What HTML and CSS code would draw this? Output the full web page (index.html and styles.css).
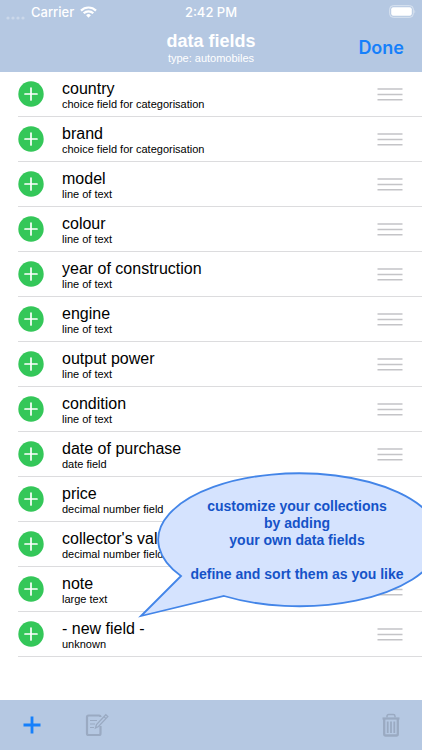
FILE: index.html
```html
<!DOCTYPE html>
<html lang="en">
<head>
<meta charset="utf-8">
<meta name="viewport" content="width=device-width, initial-scale=1">
<title>data fields</title>
<link rel="stylesheet" href="styles.css">
</head>
<body>
<svg class="sprite" aria-hidden="true">
  <symbol id="plus" viewBox="0 0 26 26"><circle cx="13" cy="13" r="12.7" fill="#34c759"/><path d="M13 7v12M7 13h12" stroke="#fff" stroke-width="1.7" stroke-linecap="round"/></symbol>
  <symbol id="grip" viewBox="0 0 26 14"><path d="M.5 2h25M.5 7.500h25M.5 12.800h25" stroke="#c4c4c7" stroke-width="1.500"/></symbol>
</svg>
<header class="top">
  <div class="status">
    <div class="carrier">
      <svg class="signal" width="19" height="4" viewBox="0 0 19 4" fill="#cbd8ea" aria-hidden="true"><circle cx="2" cy="2" r="1.600"/><circle cx="7" cy="2" r="1.600"/><circle cx="12" cy="2" r="1.600"/><circle cx="17" cy="2" r="1.600"/></svg>
      <span>Carrier</span>
      <svg width="17" height="12" viewBox="0 0 17 12" fill="none" stroke="#fff" stroke-width="2.200" aria-hidden="true"><path d="M1 4.600a10.600 10.600 0 0 1 15 0M3.700 7.300a6.800 6.800 0 0 1 9.600 0"/><path d="M8.500 11.700 6.100 9.300a3.400 3.400 0 0 1 4.800 0z" fill="#fff" stroke="none"/></svg>
    </div>
    <span>2:42 PM</span>
    <svg class="battery" width="27" height="13" viewBox="0 0 27 13" aria-hidden="true"><rect x=".7" y=".7" width="23.600" height="11.600" rx="3.500" fill="none" stroke="#dae4f1"/><rect x="2.200" y="2.200" width="20.600" height="8.600" rx="2" fill="#fff"/><path d="M25.500 4.500q1.300 2 0 4z" fill="#dae4f1"/></svg>
  </div>
  <div class="nav">
    <div class="heading"><h1>data fields</h1><p>type: automobiles</p></div>
    <button class="done" type="button">Done</button>
  </div>
</header>
<main class="content">
  <ul class="fields">
    <li><button type="button" aria-label="Add country"><svg class="plus"><use href="#plus"/></svg></button><div class="label"><h2>country</h2><p>choice field for categorisation</p></div><button type="button" aria-label="Move country"><svg class="grip"><use href="#grip"/></svg></button></li>
    <li><button type="button" aria-label="Add brand"><svg class="plus"><use href="#plus"/></svg></button><div class="label"><h2>brand</h2><p>choice field for categorisation</p></div><button type="button" aria-label="Move brand"><svg class="grip"><use href="#grip"/></svg></button></li>
    <li><button type="button" aria-label="Add model"><svg class="plus"><use href="#plus"/></svg></button><div class="label"><h2>model</h2><p>line of text</p></div><button type="button" aria-label="Move model"><svg class="grip"><use href="#grip"/></svg></button></li>
    <li><button type="button" aria-label="Add colour"><svg class="plus"><use href="#plus"/></svg></button><div class="label"><h2>colour</h2><p>line of text</p></div><button type="button" aria-label="Move colour"><svg class="grip"><use href="#grip"/></svg></button></li>
    <li><button type="button" aria-label="Add year of construction"><svg class="plus"><use href="#plus"/></svg></button><div class="label"><h2>year of construction</h2><p>line of text</p></div><button type="button" aria-label="Move year of construction"><svg class="grip"><use href="#grip"/></svg></button></li>
    <li><button type="button" aria-label="Add engine"><svg class="plus"><use href="#plus"/></svg></button><div class="label"><h2>engine</h2><p>line of text</p></div><button type="button" aria-label="Move engine"><svg class="grip"><use href="#grip"/></svg></button></li>
    <li><button type="button" aria-label="Add output power"><svg class="plus"><use href="#plus"/></svg></button><div class="label"><h2>output power</h2><p>line of text</p></div><button type="button" aria-label="Move output power"><svg class="grip"><use href="#grip"/></svg></button></li>
    <li><button type="button" aria-label="Add condition"><svg class="plus"><use href="#plus"/></svg></button><div class="label"><h2>condition</h2><p>line of text</p></div><button type="button" aria-label="Move condition"><svg class="grip"><use href="#grip"/></svg></button></li>
    <li><button type="button" aria-label="Add date of purchase"><svg class="plus"><use href="#plus"/></svg></button><div class="label"><h2>date of purchase</h2><p>date field</p></div><button type="button" aria-label="Move date of purchase"><svg class="grip"><use href="#grip"/></svg></button></li>
    <li><button type="button" aria-label="Add price"><svg class="plus"><use href="#plus"/></svg></button><div class="label"><h2>price</h2><p>decimal number field</p></div><button type="button" aria-label="Move price"><svg class="grip"><use href="#grip"/></svg></button></li>
    <li><button type="button" aria-label="Add collector's value"><svg class="plus"><use href="#plus"/></svg></button><div class="label"><h2>collector's value</h2><p>decimal number field</p></div><button type="button" aria-label="Move collector's value"><svg class="grip"><use href="#grip"/></svg></button></li>
    <li><button type="button" aria-label="Add note"><svg class="plus"><use href="#plus"/></svg></button><div class="label"><h2>note</h2><p>large text</p></div><button type="button" aria-label="Move note"><svg class="grip"><use href="#grip"/></svg></button></li>
    <li><button type="button" aria-label="Add new field"><svg class="plus"><use href="#plus"/></svg></button><div class="label"><h2>- new field -</h2><p>unknown</p></div><button type="button" aria-label="Move new field"><svg class="grip"><use href="#grip"/></svg></button></li>
  </ul>
  <aside class="bubble">
    <svg width="302" height="146" viewBox="0 0 302 146" aria-hidden="true"><path d="M43 104 3 144 86 124A141 66.500 0 1 0 43 104Z" fill="#d5e3fe" stroke="#4385e8" stroke-width="1.800"/></svg>
    <div class="message">
      <p>customize your collections<br>by adding<br>your own data fields</p>
      <p>define and sort them as you like</p>
    </div>
  </aside>
</main>
<footer class="toolbar">
  <button type="button" aria-label="Add"><svg width="18" height="18" viewBox="0 0 18 18"><path d="M9 .5v17M.5 9h17" stroke="#1680fb" stroke-width="2.800"/></svg></button>
  <button type="button" aria-label="Edit" disabled><svg width="24" height="24" viewBox="0 0 24 24" fill="none" stroke="#9aaac2" stroke-width="1.500"><path d="M15.500 4V4Q15.500 2.500 14 2.500H3.500Q2 2.500 2 4V20.500Q2 22 3.500 22H14Q15.500 22 15.500 20.500V13" stroke-width="2.200"/><path d="M5 7.500h7M5 11h5M5 14.500h4" stroke-width="1.200"/><path d="m10.500 15 1-3.500L20.800 1.700l2 1.900L13.500 13.500z M19 3.600l2 2" fill="#b5c8e2" stroke-width="1.300"/></svg></button>
  <button class="trash" type="button" aria-label="Delete" disabled><svg width="18" height="24" viewBox="0 0 18 24" fill="none" stroke="#9aaac2"><path d="M5 4.500V3.200Q5 1.500 6.700 1.500h4.600Q13 1.500 13 3.200v1.300" stroke-width="1.500"/><path d="M.5 5.500h17" stroke-width="2.200"/><path d="M2.200 6v15Q2.200 22.500 3.700 22.500h10.600q1.500 0 1.500-1.500V6" stroke-width="2.300"/><path d="M5.700 8.500v11.500M9 8.500v11.500M12.300 8.500v11.500" stroke-width="1.800"/></svg></button>
</footer>
</body>
</html>
```
FILE: styles.css
```css
* { box-sizing: border-box; }
body, h1, h2, p, ul { margin: 0; padding: 0; }
body {
  display: flex;
  flex-direction: column;
  min-height: 100vh;
  background: #fff;
  color: #000;
  font-family: "Liberation Sans", Arial, sans-serif;
}
button {
  display: flex;
  padding: 0;
  border: 0;
  background: none;
  font-family: inherit;
}
svg { display: block; flex-shrink: 0; }
.sprite { position: absolute; width: 0; height: 0; }

.top { background: #b5c8e2; color: #fff; }
.status {
  display: grid;
  grid-template-columns: 1fr auto 1fr;
  align-items: center;
  height: 23px;
  padding: 0 6px;
  font-family: Inter, "Liberation Sans", sans-serif;
  font-size: 13px;
  font-weight: 500;
  line-height: 16px;
}
.carrier { display: flex; align-items: center; gap: 6px; }
.signal { align-self: end; }
.battery { justify-self: end; }
.nav {
  display: grid;
  grid-template-columns: 1fr auto 1fr;
  align-items: center;
  height: 49px;
  padding: 0 18px;
}
.heading { grid-column: 2; text-align: center; }
.heading h1 { font-size: 18px; line-height: 20px; }
.heading p { font-size: 11px; line-height: 14px; }
.done {
  justify-self: end;
  color: #1680fb;
  font-family: Inter, "Liberation Sans", sans-serif;
  font-size: 18px;
  font-weight: 600;
}

.content { position: relative; flex: 1; overflow: hidden; }
.fields { list-style: none; }
.fields li {
  display: flex;
  align-items: center;
  height: 45px;
  margin-left: 18px;
  padding-right: 19px;
  border-bottom: 1px solid #dcdcde;
}
.plus { width: 26px; height: 26px; }
.grip { width: 26px; height: 14px; }
.label { flex: 1; padding: 2px 0 0 18px; }
.label h2 { font-size: 16px; font-weight: 400; line-height: 18px; }
.label p { font-size: 11px; line-height: 13px; }

.bubble { position: absolute; top: 400px; left: 138px; display: grid; }
.bubble > * { grid-area: 1 / 1; }
.message {
  display: grid;
  align-content: start;
  gap: 17px;
  padding: 26px 0 0 16px;
  color: #1553c8;
  font-size: 14px;
  font-weight: 700;
  line-height: 17px;
  text-align: center;
}

.toolbar {
  display: flex;
  align-items: center;
  gap: 44px;
  height: 50px;
  padding: 0 22px 0 23px;
  background: #b5c8e2;
}
.trash { margin-left: auto; }
```
